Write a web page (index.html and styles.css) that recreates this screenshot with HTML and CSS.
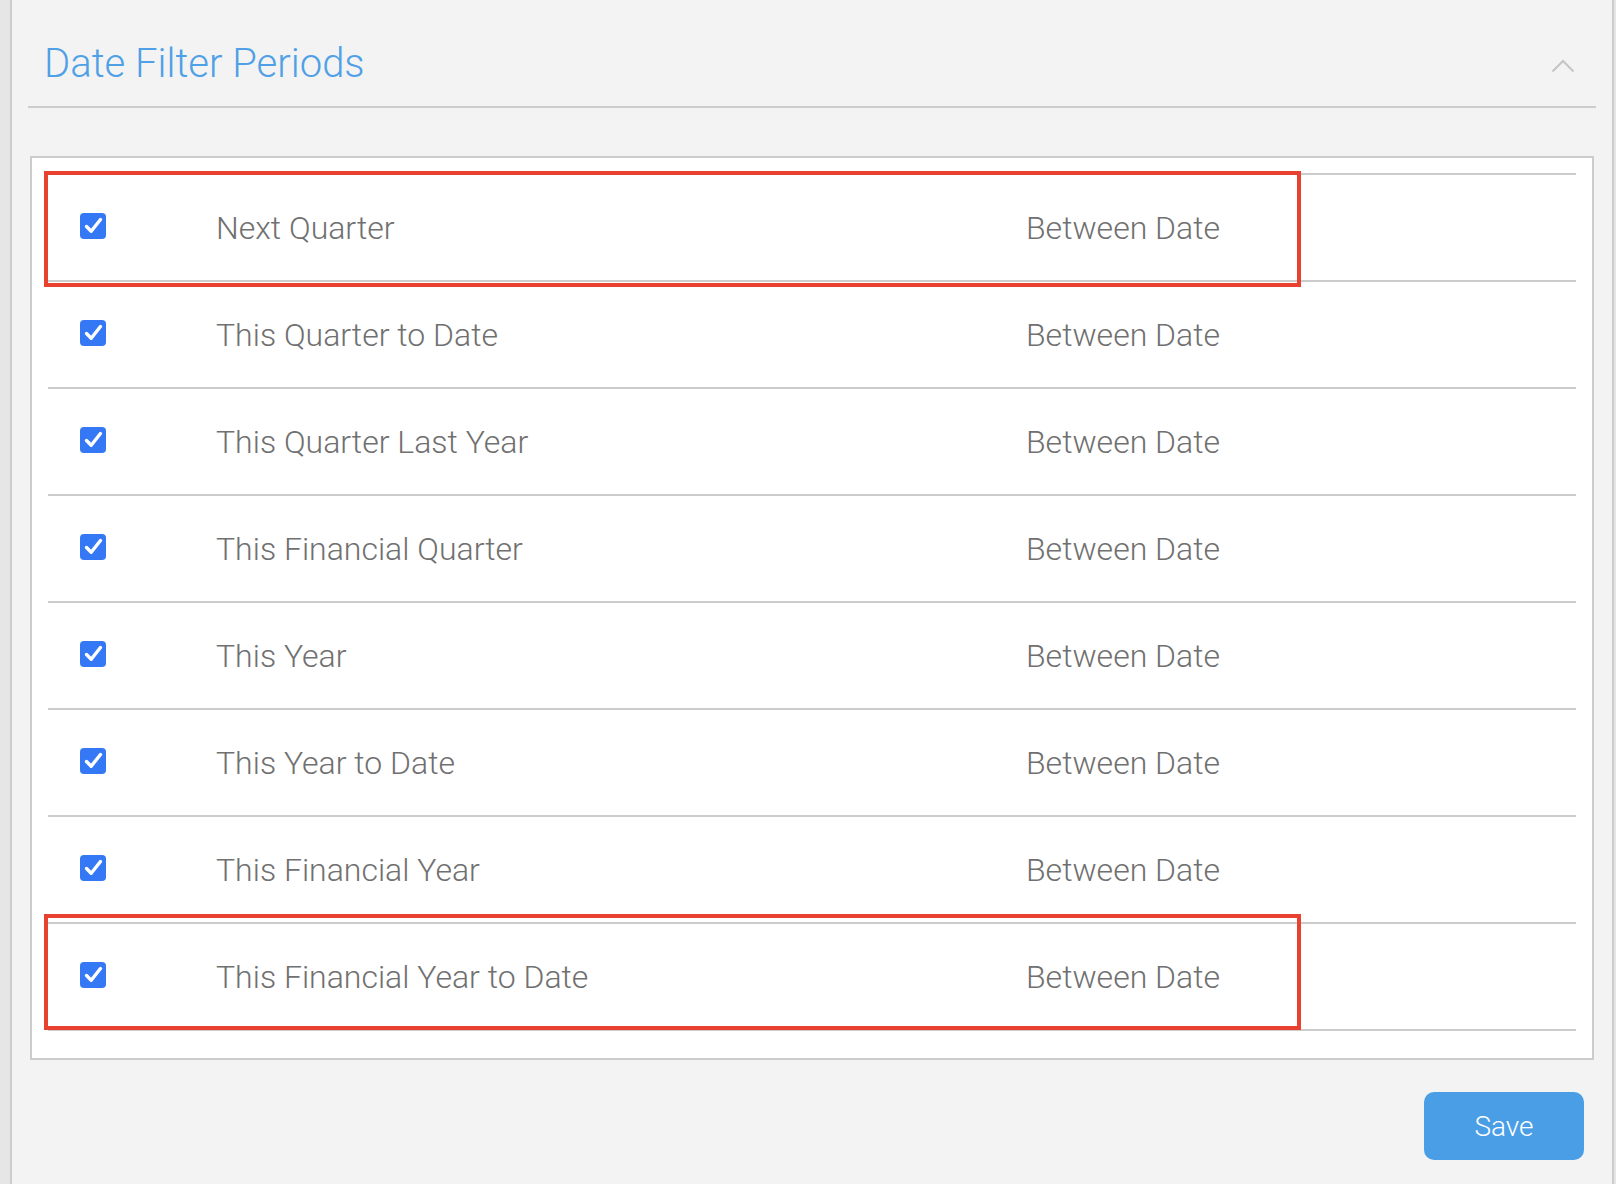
FILE: index.html
```html
<!DOCTYPE html>
<html lang="en">
<head>
<meta charset="utf-8">
<title>Date Filter Periods</title>
<link rel="stylesheet" href="styles.css">
</head>
<body>
<div class="panel">
  <div class="panel-header">
    <h2 class="panel-title">Date Filter Periods</h2>
    <svg class="chevron" width="24" height="24" viewBox="0 0 24 24" aria-hidden="true">
      <polyline points="1.5,17.5 12,7 22.5,17.5" fill="none" stroke="#c4c4c4" stroke-width="2"/>
    </svg>
  </div>

  <div class="card">
    <div class="list">
      <div class="row">
        <span class="check"><svg viewBox="0 0 26 26" width="26" height="26"><path d="M6.5 13.5 L11.2 18.2 L20.5 6.5" fill="none" stroke="#fff" stroke-width="3.4" stroke-linecap="round" stroke-linejoin="round"/></svg></span>
        <span class="label">Next Quarter</span>
        <span class="type">Between Date</span>
      </div>
      <div class="row">
        <span class="check"><svg viewBox="0 0 26 26" width="26" height="26"><path d="M6.5 13.5 L11.2 18.2 L20.5 6.5" fill="none" stroke="#fff" stroke-width="3.4" stroke-linecap="round" stroke-linejoin="round"/></svg></span>
        <span class="label">This Quarter to Date</span>
        <span class="type">Between Date</span>
      </div>
      <div class="row">
        <span class="check"><svg viewBox="0 0 26 26" width="26" height="26"><path d="M6.5 13.5 L11.2 18.2 L20.5 6.5" fill="none" stroke="#fff" stroke-width="3.4" stroke-linecap="round" stroke-linejoin="round"/></svg></span>
        <span class="label">This Quarter Last Year</span>
        <span class="type">Between Date</span>
      </div>
      <div class="row">
        <span class="check"><svg viewBox="0 0 26 26" width="26" height="26"><path d="M6.5 13.5 L11.2 18.2 L20.5 6.5" fill="none" stroke="#fff" stroke-width="3.4" stroke-linecap="round" stroke-linejoin="round"/></svg></span>
        <span class="label">This Financial Quarter</span>
        <span class="type">Between Date</span>
      </div>
      <div class="row">
        <span class="check"><svg viewBox="0 0 26 26" width="26" height="26"><path d="M6.5 13.5 L11.2 18.2 L20.5 6.5" fill="none" stroke="#fff" stroke-width="3.4" stroke-linecap="round" stroke-linejoin="round"/></svg></span>
        <span class="label">This Year</span>
        <span class="type">Between Date</span>
      </div>
      <div class="row">
        <span class="check"><svg viewBox="0 0 26 26" width="26" height="26"><path d="M6.5 13.5 L11.2 18.2 L20.5 6.5" fill="none" stroke="#fff" stroke-width="3.4" stroke-linecap="round" stroke-linejoin="round"/></svg></span>
        <span class="label">This Year to Date</span>
        <span class="type">Between Date</span>
      </div>
      <div class="row">
        <span class="check"><svg viewBox="0 0 26 26" width="26" height="26"><path d="M6.5 13.5 L11.2 18.2 L20.5 6.5" fill="none" stroke="#fff" stroke-width="3.4" stroke-linecap="round" stroke-linejoin="round"/></svg></span>
        <span class="label">This Financial Year</span>
        <span class="type">Between Date</span>
      </div>
      <div class="row">
        <span class="check"><svg viewBox="0 0 26 26" width="26" height="26"><path d="M6.5 13.5 L11.2 18.2 L20.5 6.5" fill="none" stroke="#fff" stroke-width="3.4" stroke-linecap="round" stroke-linejoin="round"/></svg></span>
        <span class="label">This Financial Year to Date</span>
        <span class="type">Between Date</span>
      </div>
    </div>
    <div class="highlight highlight-top"></div>
    <div class="highlight highlight-bottom"></div>
  </div>

  <div class="actions">
    <button class="save-btn" type="button">Save</button>
  </div>
</div>
</body>
</html>
```

FILE: styles.css
```css
html, body {
  margin: 0;
  padding: 0;
}

body {
  background: #e6e6e6;
  font-family: "Roboto Light", Roboto, "Liberation Sans", Arial, sans-serif;
  width: 1616px;
  height: 1184px;
  overflow: hidden;
  display: flex;
}

.panel {
  margin-left: 10px;
  margin-right: 2px;
  border-left: 2px solid #cccccc;
  border-right: 2px solid #cccccc;
  background: #f3f3f3;
  flex: 1;
  min-height: 1184px;
  box-sizing: border-box;
}

.panel-header {
  display: flex;
  align-items: center;
  justify-content: space-between;
  margin: 0 16px;
  padding: 38px 15px 16px 16px;
  border-bottom: 2px solid #cccccc;
}

.panel-title {
  margin: 0;
  font-size: 40px;
  line-height: 52px;
  font-weight: 300;
  color: #4fa0e6;
}

.chevron {
  display: block;
  margin-right: 6px;
  margin-top: 4px;
}

.card {
  position: relative;
  margin: 48px 18px 0 18px;
  border: 2px solid #cccccc;
  background: #ffffff;
  padding: 15px 16px 27px 16px;
}

.list {
  border-top: 2px solid #cccccc;
}

.row {
  display: grid;
  grid-template-columns: 168px 810px 1fr;
  align-items: center;
  height: 105px;
  border-bottom: 2px solid #cccccc;
  font-size: 32px;
  font-weight: 300;
  color: #707070;
}

.check {
  margin-left: 32px;
  width: 26px;
  height: 26px;
  border-radius: 4px;
  background: #3478f6;
  display: block;
  margin-top: -3px;
}

.check svg {
  display: block;
}

.label,
.type {
  white-space: nowrap;
}

.highlight {
  position: absolute;
  left: 12px;
  width: 1257px;
  height: 116px;
  border: 4px solid #e84130;
  box-sizing: border-box;
  pointer-events: none;
}

.highlight-top {
  top: 13px;
}

.highlight-bottom {
  top: 756px;
}

.actions {
  display: flex;
  justify-content: flex-end;
  padding-right: 28px;
  margin-top: 32px;
}

.save-btn {
  width: 160px;
  height: 68px;
  border: none;
  border-radius: 10px;
  background: #499ee6;
  color: #ffffff;
  font-family: "Roboto Light", Roboto, "Liberation Sans", Arial, sans-serif;
  font-size: 28px;
  font-weight: 300;
  cursor: pointer;
}
```
